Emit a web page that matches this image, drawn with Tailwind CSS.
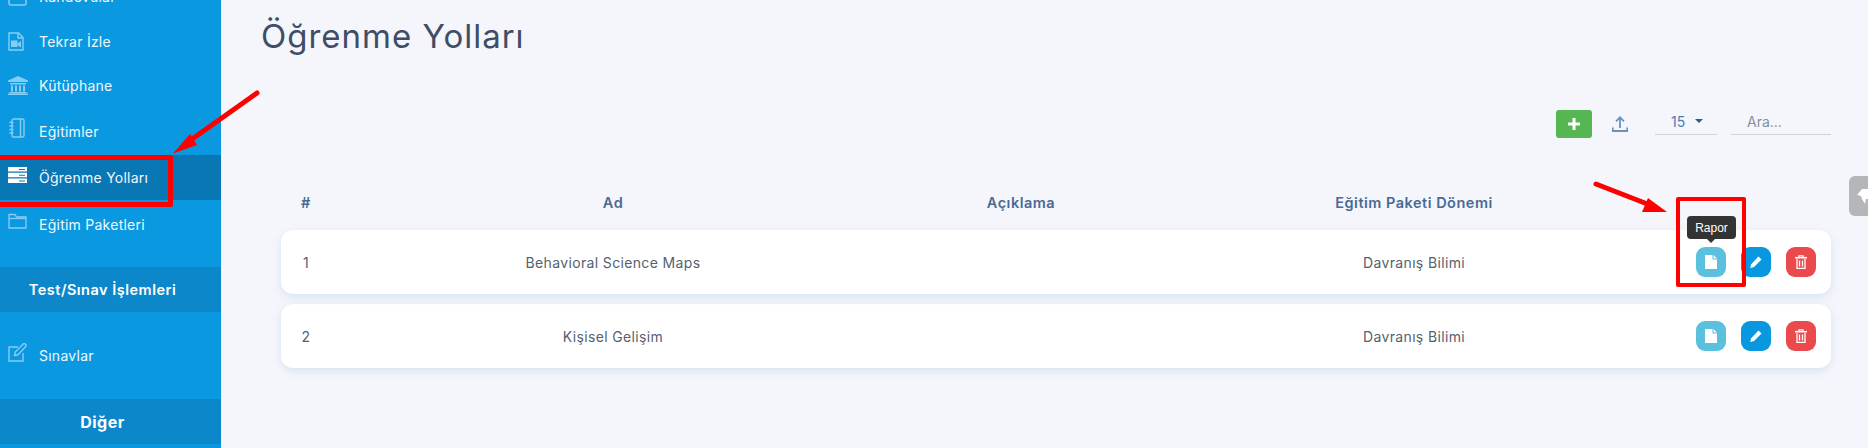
<!DOCTYPE html>
<html lang="tr">
<head>
    <meta charset="UTF-8">
    <title>Öğrenme Yolları</title>
    <script src="https://cdn.jsdelivr.net/npm/@tailwindcss/browser@4"></script>
</head>
<body class="bg-[#f4f6fb] font-['Inter',sans-serif]">
<div class="relative flex h-[448px] w-[1868px] overflow-hidden">

    <!-- Sidebar -->
    <aside class="w-[221px] shrink-0 bg-[#0a98e0] text-[14px] tracking-[0.25px] text-[#eef8fe]">
        <div class="-mt-[26px] flex h-[45px] items-center gap-[12px] pl-[8px]">
            <svg class="h-[18px] w-[19px] text-[#86cdf3]" viewBox="0 0 19 18" fill="none" stroke="currentColor" stroke-width="1.5"><rect x="1" y="1" width="17" height="16" rx="1.5"/></svg>
            <span>Randevular</span>
        </div>
        <!-- Tekrar Izle -->
        <div class="flex h-[44px] items-center gap-[15px] pl-[8px]">
            <svg class="h-[19px] w-[16px] text-[#86cdf3]" viewBox="0 0 16 19" fill="none" stroke="currentColor" stroke-width="1.4"><path d="M1 1h9.500l4.500 4.500V18H1z"/><path d="M10 1v5h5"/><path d="M3 8.500h6.500v6.500H3z" fill="currentColor" stroke="none"/><path d="M9.500 11.500l3.500-2.500v6.500l-3.500-2.500z" fill="currentColor" stroke="none"/></svg>
            <span>Tekrar İzle</span>
        </div>
        <!-- Kutuphane -->
        <div class="flex h-[44px] items-center gap-[11px] pl-[8px]">
            <svg class="h-[19px] w-[20px] text-[#86cdf3]" viewBox="0 0 20 19" fill="currentColor"><path d="M10 0l10 4.500V6H0V4.500z"/><path d="M2 7h16v1.500H2z"/><path d="M3 9.500h2v6H3zM7 9.500h2v6H7zM11 9.500h2v6h-2zM15 9.500h2v6h-2z"/><path d="M1.500 16h17v1.300h-17zM0 17.500h20V19H0z"/></svg>
            <span>Kütüphane</span>
        </div>
        <!-- Egitimler -->
        <div class="flex h-[48px] items-center gap-[14px] pl-[9px]">
            <svg class="h-[20px] w-[16px] -translate-y-[3px] text-[#86cdf3]" viewBox="0 0 16 20" fill="none" stroke="currentColor" stroke-width="1.4"><rect x="3" y="1" width="12" height="18" rx="1.500"/><path d="M11.500 1v18"/><path d="M.5 4.500h4M.5 8h4M.5 11.500h4M.5 15h4"/></svg>
            <span>Eğitimler</span>
        </div>
        <!-- Ogrenme Yollari (aktif) -->
        <div class="flex h-[45px] items-center gap-[12px] bg-[#0a77b5] pl-[8px]">
            <svg class="h-[16px] w-[19px] -translate-y-[3px] text-white" viewBox="0 0 19 16" fill="currentColor"><path d="M0 0h19v4.500H0zM0 5.700h19v4.500H0zM0 11.400h19v4.500H0z"/><path d="M11 2h6v1h-6zM11 7.700h6v1h-6zM11 13.400h6v1h-6z" fill="#0a77b5"/></svg>
            <span>Öğrenme Yolları</span>
        </div>
        <!-- Egitim Paketleri -->
        <div class="mt-px flex h-[46px] items-center gap-[12px] pl-[8px]">
            <svg class="h-[16px] w-[19px] -translate-y-[3px] text-[#86cdf3]" viewBox="0 0 19 16" fill="none" stroke="currentColor" stroke-width="1.3"><path d="M1 15V1.500h6l1.500 2.500H18v11z"/><path d="M1 5.500h17"/></svg>
            <span>Eğitim Paketleri</span>
        </div>
        <div class="mt-[20px] flex h-[45px] items-center justify-center bg-[#0b87ca] pr-[16px] text-[14.500px] font-semibold tracking-[0.5px] text-white">Test/Sınav İşlemleri</div>
        <!-- Sinavlar -->
        <div class="flex h-[87px] items-center gap-[12px] pl-[8px]">
            <svg class="h-[19px] w-[19px] -translate-y-[3px] text-[#86cdf3]" viewBox="0 0 19 19" fill="none" stroke="currentColor" stroke-width="1.4"><path d="M15 10v8H1V4h9"/><path d="M6.500 12.500l.7-3.500L15 1.200a1.500 1.500 0 0 1 2.500 2.500L10 11.800z"/></svg>
            <span>Sınavlar</span>
        </div>
        <div class="flex h-[45px] items-center justify-center bg-[#0b87ca] pr-[16px] text-[16px] font-bold tracking-[0.5px] text-white">Diğer</div>
    </aside>

    <!-- Main -->
    <main class="min-w-0 flex-1 pl-[40px] pr-[37px]">
        <h1 class="h-[110px] pt-[14px] text-[33px] leading-[44px] font-normal tracking-[1px] text-[#3f4d67]">Öğrenme Yolları</h1>

        <div class="flex h-[28px] items-start justify-end">
            <button class="flex h-[28px] w-[36px] items-center justify-center rounded-[3px] bg-[#56b651]">
                <svg class="h-[12px] w-[12px]" viewBox="0 0 12 12" fill="#fff"><path d="M4.500 0h3v4.500H12v3H7.500V12h-3V7.500H0v-3h4.500z"/></svg>
            </button>
            <div class="ml-[20px] flex h-[28px] w-[16px] items-center">
                <svg class="h-[16px] w-[16px]" viewBox="0 0 16 16" fill="none" stroke="#6d93bb" stroke-width="1.800"><path d="M8 12V1.500M4 5.300L8 1.300l4 4"/><path d="M.8 11.500v3.500h14.400v-3.500"/></svg>
            </div>
            <div class="ml-[27px] flex h-[25px] w-[62px] items-center gap-[10px] border-b border-[#d0d3dc] pb-[2px] pl-[16px] text-[14px] text-[#4a7fb0]">
                15
                <span class="h-0 w-0 border-x-[4px] border-t-[4px] border-x-transparent border-t-[#2a5a90]"></span>
            </div>
            <div class="ml-[14px] flex h-[25px] w-[100px] items-center border-b border-[#d0d3dc] pb-[2px] pl-[16px] text-[14px] text-[#8a8f99]">Ara...</div>
        </div>

        <!-- Tablo -->
        <div class="ml-[20px] mt-[44px] grid h-[41px] grid-cols-[50px_564px_252px_534px_150px] items-center text-center text-[14.500px] font-semibold tracking-[0.5px] text-[#4a6a94]">
            <div>#</div>
            <div>Ad</div>
            <div>Açıklama</div>
            <div>Eğitim Paketi Dönemi</div>
            <div></div>
        </div>
        <div class="ml-[20px] mt-[7px] flex flex-col gap-[10px] text-[14px] tracking-[0.35px] text-[#555f70]">
            <div class="relative grid h-[64px] grid-cols-[50px_564px_252px_534px_150px] items-center rounded-[12px] bg-white text-center shadow-[0_3px_8px_rgba(130,170,225,0.25)]">
                <div>1</div>
                <div>Behavioral Science Maps</div>
                <div></div>
                <div>Davranış Bilimi</div>
                <div class="flex justify-end gap-[15px] pr-[15px]">
                    <button class="relative flex h-[30px] w-[30px] items-center justify-center rounded-[9px] bg-[#5bc0de]">
                        <svg class="h-[14px] w-[12px]" viewBox="0 0 12 14" fill="#fff"><path d="M0 0h7.500v4.500H12V14H0zM8.500 0L12 3.500H8.500z"/></svg>
                        <!-- tooltip -->
                        <span class="absolute -top-[31px] left-[-9px] flex h-[23px] w-[49px] items-center justify-center rounded-[4px] bg-[#333] font-['Liberation_Sans',sans-serif] text-[12px] tracking-normal text-white">Rapor</span>
                        <span class="absolute -top-[8px] left-[11px] h-0 w-0 border-x-[4px] border-t-[4px] border-x-transparent border-t-[#333]"></span>
                    </button>
                    <button class="flex h-[30px] w-[30px] items-center justify-center rounded-[9px] bg-[#0898e0]">
                        <svg class="h-[12px] w-[12px]" viewBox="0 0 12 12" fill="#fff"><path d="M8.500.5l3 3-7.500 7.500-3.800 1 1-3.800z"/></svg>
                    </button>
                    <button class="flex h-[30px] w-[30px] items-center justify-center rounded-[9px] bg-[#eb4a4d]">
                        <svg class="h-[14px] w-[12px]" viewBox="0 0 12 14" fill="none" stroke="#fff" stroke-width="1.300"><path d="M2 4v9.300h8V4"/><path d="M0 2.700h12" stroke-width="1.600"/><path d="M4 2.500V.8h4v1.700M4.500 5.500v6M7.500 5.500v6"/></svg>
                    </button>
                </div>
            </div>
            <div class="grid h-[64px] grid-cols-[50px_564px_252px_534px_150px] items-center rounded-[12px] bg-white text-center shadow-[0_3px_8px_rgba(130,170,225,0.25)]">
                <div>2</div>
                <div>Kişisel Gelişim</div>
                <div></div>
                <div>Davranış Bilimi</div>
                <div class="flex justify-end gap-[15px] pr-[15px]">
                    <button class="flex h-[30px] w-[30px] items-center justify-center rounded-[9px] bg-[#5bc0de]">
                        <svg class="h-[14px] w-[12px]" viewBox="0 0 12 14" fill="#fff"><path d="M0 0h7.500v4.500H12V14H0zM8.500 0L12 3.500H8.500z"/></svg>
                    </button>
                    <button class="flex h-[30px] w-[30px] items-center justify-center rounded-[9px] bg-[#0898e0]">
                        <svg class="h-[12px] w-[12px]" viewBox="0 0 12 12" fill="#fff"><path d="M8.500.5l3 3-7.500 7.500-3.800 1 1-3.800z"/></svg>
                    </button>
                    <button class="flex h-[30px] w-[30px] items-center justify-center rounded-[9px] bg-[#eb4a4d]">
                        <svg class="h-[14px] w-[12px]" viewBox="0 0 12 14" fill="none" stroke="#fff" stroke-width="1.300"><path d="M2 4v9.300h8V4"/><path d="M0 2.700h12" stroke-width="1.600"/><path d="M4 2.500V.8h4v1.700M4.500 5.500v6M7.500 5.500v6"/></svg>
                    </button>
                </div>
            </div>
        </div>
    </main>

    <!-- Sag kenardaki gri widget -->
    <div class="absolute left-[1849px] top-[176px] flex h-[40px] w-[19px] items-center overflow-hidden rounded-l-[6px] bg-[#b5b6ba]">
        <svg class="ml-[8px] h-[17px] w-[14px] shrink-0" viewBox="0 0 14 17" fill="#fff"><path d="M0 7l5-6h9v10H9l-1 5-3-5-1-3z"/></svg>
    </div>

    <!-- Kirmizi isaretler (ekran goruntusu notlari) -->
    <svg class="pointer-events-none absolute left-0 top-0" width="1868" height="448" fill="none">
        <path d="M-6 157.500H170.500V204.500H-6" stroke="#ff0000" stroke-width="5" stroke-linejoin="round"/>
        <rect x="1678" y="199" width="66" height="86" stroke="#ff0000" stroke-width="4" stroke-linejoin="round"/>
        <path d="M257 93L188 142" stroke="#ff0000" stroke-width="5" stroke-linecap="round"/>
        <path d="M173 153.500L190 134L197 145z" fill="#ff0000"/>
        <path d="M1596 184L1650 205" stroke="#ff0000" stroke-width="5" stroke-linecap="round"/>
        <path d="M1667 212L1642 212L1648 198z" fill="#ff0000"/>
    </svg>
</div>
</body>
</html>
